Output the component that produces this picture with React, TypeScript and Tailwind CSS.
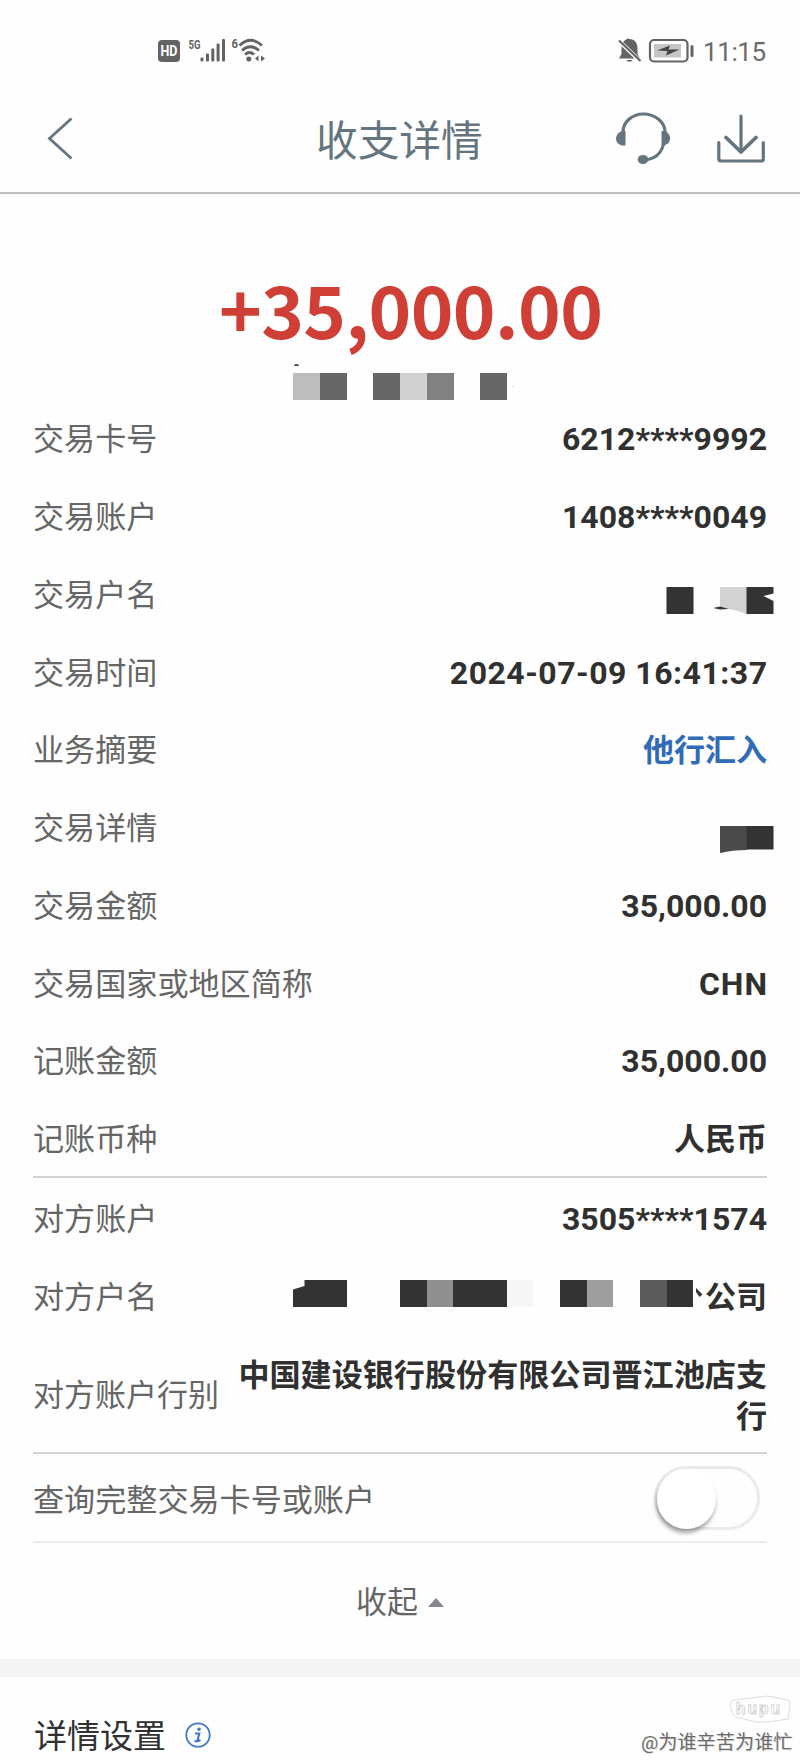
import type { ReactNode } from "react";

type Block = { x: number; w: number; fill: string };

function Mosaic({ blocks, width }: { blocks: Block[]; width: number }) {
  return (
    <svg width={width} height={27} viewBox={`0 0 ${width} 27`} shapeRendering="crispEdges">
      {blocks.map((b) => (
        <rect key={b.x} x={b.x} y={0} width={b.w} height={27} fill={b.fill} />
      ))}
    </svg>
  );
}

function Row({ label, children }: { label: string; children: ReactNode }) {
  return (
    <div className="flex h-[77.75px] items-center justify-between">
      <span className="mt-[2px] text-[31.100px] leading-none text-[#666666]">{label}</span>
      <span className="mt-px flex items-center text-[32px] leading-none font-bold text-[#303030]">{children}</span>
    </div>
  );
}

function StatusBar() {
  return (
    <div className="flex h-[90px] items-start justify-between pt-[30px] pr-[34px] pl-[157px] text-[#636363]">
      <svg width="110" height="40" viewBox="157 30 110 40" fill="currentColor">
        <rect x="158" y="40" width="22" height="22" rx="4" />
        <text x="169" y="56.2" fontSize="14" fontWeight="700" textAnchor="middle" fill="#fff" fontFamily="Roboto, sans-serif" textLength="17" lengthAdjust="spacingAndGlyphs">HD</text>
        <text x="188.500" y="49" fontSize="13" fontWeight="700" fontFamily="Roboto, sans-serif" textLength="12" lengthAdjust="spacingAndGlyphs">5G</text>
        <rect x="200.500" y="57.500" width="3" height="4" rx="1" />
        <rect x="206" y="53.500" width="3" height="8" rx="1" />
        <rect x="211.300" y="48.500" width="3" height="13" rx="1" />
        <rect x="216.600" y="43.500" width="3" height="18" rx="1" />
        <rect x="222" y="39" width="3" height="22.500" rx="1" />
        <text x="231.500" y="48" fontSize="13" fontWeight="700" fontFamily="Roboto, sans-serif" textLength="6.500" lengthAdjust="spacingAndGlyphs">6</text>
        <g fill="none" stroke="currentColor" strokeWidth="2.800">
          <path d="M239.500 45.500Q250.500 35 262 45.500" />
          <path d="M242 50.500Q250.500 43 259 50.500" />
          <path d="M245 54.500Q249.500 50.500 254 54.500" />
        </g>
        <circle cx="248.800" cy="59" r="2.500" />
        <path d="M258.500 55.500v6l-3.500-3zM261 55.500v6l4-3z" />
      </svg>
      <div className="flex items-start">
        <svg width="80" height="40" viewBox="616 30 80 40" fill="currentColor">
          <path d="M629.500 39c5 0 8 4 8 9v6l2.500 4.500h-21l2.500-4.500v-6c0-4 2-7.500 5-8.500 0-1 1-1.500 3-.500zM626.500 60h6c-.5 2.300-5.500 2.300-6 0z" />
          <path d="M617.500 39.500l23 22" stroke="#fff" strokeWidth="4" />
          <path d="M619 40.500l21.500 20.500" stroke="currentColor" strokeWidth="2.200" />
          <rect x="650" y="40" width="37.500" height="21.500" rx="4" fill="none" stroke="currentColor" strokeWidth="2.200" />
          <rect x="654" y="44" width="27" height="13.500" fill="#c6c6c6" />
          <path d="M657 50.500l13-5-1.500 4h11l-13.500 6 1.500-4.500z" fill="#444" />
          <rect x="690.500" y="45" width="3" height="12" rx="1.500" />
        </svg>
        <span className="mt-[9px] ml-[7px] w-[63px] font-[Roboto,sans-serif] text-[26px] leading-none tracking-[-0.4px] whitespace-nowrap text-[#6b6b6b]">11:15</span>
      </div>
    </div>
  );
}

function Header() {
  return (
    <header className="flex h-[104px] items-start border-b-2 border-[#bbbfc0] text-[#64757f]">
      <svg className="mt-[20px] ml-[40px]" width="40" height="60" viewBox="40 110 40 60" fill="none" stroke="currentColor" strokeWidth="2.800">
        <path d="M71.500 118.500L49.500 138.500l22 20" />
      </svg>
      <h1 className="mt-[31px] ml-[236px] w-[167px] text-[41.700px] leading-none whitespace-nowrap">收支详情</h1>
      <svg className="mt-[10px] ml-[128px]" width="160" height="70" viewBox="610 100 160 70" fill="none" stroke="currentColor">
        <path d="M622 132c0-10 9-18 20.500-18S664 122 664 132c0 16-5 27-21 28" strokeWidth="3.200" />
        <path d="M624.500 131v14.500c-12 1-12-12.500-3-14.500zM660.500 131v14.500c12 0 10-13 3-14.500z" fill="currentColor" stroke="none" />
        <ellipse cx="642" cy="159.500" rx="5.300" ry="4.600" fill="currentColor" stroke="none" />
        <g strokeWidth="3.200" strokeLinecap="round" strokeLinejoin="round">
          <path d="M717.800 142.500v16.500q0 2 2 2h40.500q2 0 2-2v-16.500" />
          <path d="M740 116v35" />
          <path d="M725 137.500l15 14.500 15-14.500" strokeWidth="3.800" />
        </g>
      </svg>
    </header>
  );
}

export default function App() {
  return (
    <div className="relative h-[1760px] w-[800px] overflow-hidden bg-[#fefefe] font-[Roboto,'Noto_Sans_CJK_SC',sans-serif]">
      <StatusBar />
      <Header />

      <section className="flex h-[206px] flex-col pt-[72px]">
        <div className="ml-[219px] h-[84px] font-['Noto_Sans_CJK_SC',sans-serif] text-[72.500px] leading-[84px] font-bold tracking-[-0.6px] whitespace-nowrap text-[#cf3f36]">+35,000.00</div>
        <svg className="mt-[13px] ml-[293px] shrink-0" width="222" height="38" viewBox="293 363 222 38" shapeRendering="crispEdges">
          <path d="M293 366l2-2h3l1 2z" fill="#555" />
          <rect x="293" y="373" width="27" height="27" fill="#bdbdbd" />
          <rect x="320" y="373" width="27" height="27" fill="#666" />
          <rect x="373" y="373" width="27" height="27" fill="#666" />
          <rect x="400" y="373" width="27" height="27" fill="#d1d1d1" />
          <rect x="427" y="373" width="26.500" height="27" fill="#818181" />
          <rect x="480" y="373" width="27" height="27" fill="#666" />
          <rect x="512" y="386" width="2" height="1" fill="#ddd" />
        </svg>
      </section>

      <main className="mx-[33px]">
        <div className="h-[778px] border-b-2 border-[#d2d2d2]">
          <Row label="交易卡号">6212****9992</Row>
          <Row label="交易账户">1408****0049</Row>
          <Row label="交易户名">
            <svg className="mt-[11px] -mr-[7px]" width="108" height="27" viewBox="666 586 108 27">
              <path d="M666.500 586h27v27h-27z" fill="#333" />
              <path d="M720 586h27v27c-8-3-16-5-27-6z" fill="#d2d2d2" />
              <path d="M713 607l7-1.500 9 2.500-9 .5z" fill="#333" />
              <path d="M746.500 586h27v6.500l-10 2.500 10 5v13h-27z" fill="#333" />
            </svg>
          </Row>
          <Row label="交易时间"><span className="-mr-[0.5px] tracking-[0.5px]">2024-07-09 16:41:37</span></Row>
          <Row label="业务摘要"><span className="mt-px text-[31px] text-[#306bb8]">他行汇入</span></Row>
          <Row label="交易详情">
            <svg className="mt-[22px] -mr-[7px]" width="54" height="27" viewBox="720 826 54 27">
              <path d="M720 826h27v24c-10 0-18 1-27 3z" fill="#4a4a4a" />
              <path d="M746.500 826h27v23.500h-27z" fill="#333" />
            </svg>
          </Row>
          <Row label="交易金额">35,000.00</Row>
          <Row label="交易国家或地区简称"><span className="-mr-px tracking-[1px]">CHN</span></Row>
          <Row label="记账金额">35,000.00</Row>
          <Row label="记账币种"><span className="mt-px text-[31px]">人民币</span></Row>
        </div>

        <div className="h-[276px] border-b-2 border-[#d2d2d2] pt-[2px]">
          <Row label="对方账户">3505****1574</Row>
          <Row label="对方户名">
            <span className="relative -top-[4px] mr-[10px] flex">
              <Mosaic
                width={401}
                blocks={[
                  { x: 0, w: 54, fill: "#333333" },
                  { x: 107, w: 27, fill: "#333333" },
                  { x: 134, w: 27, fill: "#8f8f8f" },
                  { x: 160, w: 54, fill: "#333333" },
                  { x: 214, w: 26, fill: "#f6f6f6" },
                  { x: 267, w: 27, fill: "#333333" },
                  { x: 294, w: 26, fill: "#9e9e9e" },
                  { x: 347, w: 27, fill: "#5b5b5b" },
                  { x: 374, w: 26, fill: "#333333" },
                ]}
              />
              <svg className="absolute top-0 left-0" width="14" height="10" viewBox="0 0 14 10">
                <path d="M0 0h11.500v6L0 9.500z" fill="#fefefe" />
              </svg>
              <svg className="absolute top-[8px] left-[403px]" width="7" height="10" viewBox="0 0 7 10">
                <path d="M0 0l6.500 6.500-3 2.500L0 4z" fill="#333" />
              </svg>
            </span>
            <span className="mt-px ml-px text-[31px]">公司</span>
          </Row>
          <div className="flex h-[117px] items-center justify-between">
            <span className="mt-[2px] text-[31px] leading-none whitespace-nowrap text-[#666666]">对方账户行别</span>
            <span className="mt-[3px] w-[530px] text-right text-[31.100px] leading-[41px] font-bold text-[#303030]">中国建设银行股份有限公司晋江池店支行</span>
          </div>
        </div>

        <div className="flex h-[89px] items-center justify-between border-b-2 border-[#ededed]">
          <span className="mt-[6px] text-[31.100px] leading-none text-[#666666]">查询完整交易卡号或账户</span>
          <div className="mr-[7px] h-[64px] w-[106px] rounded-full border-[3px] border-[#ebebeb]">
            <div className="h-[60px] w-[59px] rounded-full bg-white shadow-[-1px_4px_4px_0px_rgba(0,0,0,0.36)]" />
          </div>
        </div>
      </main>

      <div className="flex h-[116px] items-center pl-[356px]">
        <span className="mt-[2px] text-[31px] leading-none text-[#666666]">收起</span>
        <svg className="mt-[2px] ml-[9.500px]" width="16" height="9" viewBox="0 0 16 9">
          <path d="M0 9L8 0l8 9z" fill="#85858d" />
        </svg>
      </div>
      <div className="h-[18px] bg-[#f4f4f4]" />

      <footer className="relative flex h-[83px] pt-[43px] pl-[34px]">
        <span className="text-[33px] leading-none text-[#303030]">详情设置</span>
        <svg className="mt-[2px] ml-[19px]" width="26" height="26" viewBox="0 0 26 26">
          <circle cx="13" cy="13" r="11.700" fill="none" stroke="#3f78c8" strokeWidth="1.800" />
          <circle cx="14" cy="7.300" r="1.800" fill="#3f78c8" />
          <path d="M10 11.500h4.300l-2 7.500c1 .4 2-.2 3-1.200M9.500 19.300h3" fill="none" stroke="#3f78c8" strokeWidth="2.100" />
        </svg>
        <svg className="absolute top-[18px] left-[728px]" width="65" height="30" viewBox="0 0 65 30">
          <path d="M2 8Q5 4 15 4L40 1 60 5Q63 6 62 11L60 24 40 27 28 27 8 22Q3 20 2 8z" fill="#fff" stroke="#dcdcdc" strokeWidth="1" />
          <text x="8" y="18.500" letterSpacing="2" fontFamily="Roboto, sans-serif" fontWeight="700" fontSize="17" fill="#fff" stroke="#d0d0d0" strokeWidth="0.800">hupu</text>
        </svg>
        <span className="absolute top-[56px] left-[641px] text-[19.200px] leading-none whitespace-nowrap text-[#6a6a6a] [text-shadow:1px_1px_0_#e4e4e4]">@为谁辛苦为谁忙</span>
      </footer>
    </div>
  );
}
